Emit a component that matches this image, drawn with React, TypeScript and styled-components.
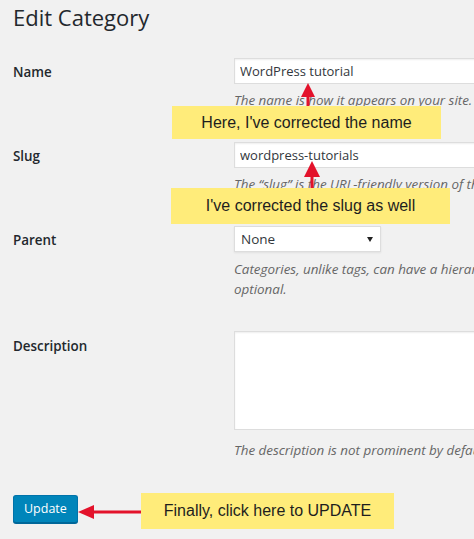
import React from "react";
import styled, { createGlobalStyle } from "styled-components";

const GlobalStyle = createGlobalStyle`
  html, body {
    margin: 0;
    padding: 0;
    background: #f1f1f1;
    overflow: hidden;
  }
  body {
    font-family: "Open Sans", "Noto Sans", sans-serif;
    color: #23282d;
  }
`;

const Page = styled.div`
  position: relative;
  width: 474px;
  height: 539px;
  overflow: hidden;
  padding-left: 13px;
  box-sizing: border-box;
`;

const Title = styled.h1`
  margin: 0;
  padding-top: 3px;
  font-size: 22px;
  font-weight: 400;
  line-height: 29px;
  color: #23282d;
`;

const Form = styled.div`
  margin-top: 10px;
  display: flex;
  flex-direction: column;
`;

const Row = styled.div`
  display: grid;
  grid-template-columns: 221px 900px;
  padding: 16px 0;
`;

const Label = styled.label<{ $shift?: number }>`
  font-size: 13.4px;
  font-weight: 600;
  line-height: 26px;
  padding-top: ${(p) => p.$shift ?? 1}px;
`;

const Field = styled.div`
  display: flex;
  flex-direction: column;
  align-items: flex-start;
`;

const TextInput = styled.input`
  box-sizing: border-box;
  width: 420px;
  height: 26px;
  margin: 0;
  padding: 0 5px;
  border: 1px solid #ddd;
  box-shadow: inset 0 1px 2px rgba(0, 0, 0, 0.07);
  background: #fff;
  font-family: inherit;
  font-size: 13px;
  color: #32373c;
  outline: none;
`;

const SelectWrap = styled.div`
  position: relative;
  width: 147px;
`;

const Select = styled.select`
  box-sizing: border-box;
  width: 147px;
  height: 26px;
  margin: 0;
  padding: 0 6px;
  border: 1px solid #ddd;
  box-shadow: 0 1px 2px rgba(0, 0, 0, 0.07);
  background: #fff;
  font-family: inherit;
  font-size: 13.5px;
  color: #32373c;
  appearance: none;
  border-radius: 0;
  outline: none;
`;

const Caret = styled.svg`
  position: absolute;
  right: 8px;
  top: 11px;
  pointer-events: none;
`;

const TextArea = styled.textarea`
  display: block;
  box-sizing: border-box;
  width: 420px;
  height: 99px;
  margin: 0;
  border: 1px solid #ddd;
  box-shadow: inset 0 1px 2px rgba(0, 0, 0, 0.07);
  background: #fff;
  resize: none;
  outline: none;
`;

const Description = styled.p<{ $gap?: number }>`
  margin: ${(p) => p.$gap ?? 6}px 0 0;
  font-size: 13.4px;
  line-height: 20px;
  font-style: italic;
  color: #666;
  white-space: nowrap;
`;

const Actions = styled.div`
  padding-top: 19px;
`;

const Button = styled.button`
  box-sizing: border-box;
  height: 28px;
  padding: 0 10px 1px;
  border: 1px solid #0073aa;
  border-bottom-color: #006799;
  border-radius: 3px;
  background: #0085ba;
  box-shadow: 0 1px 0 #006799;
  color: #fff;
  font-family: inherit;
  font-size: 12.5px;
  line-height: 26px;
  cursor: pointer;
`;

const Callout = styled.div<{ $x: number; $y: number; $w: number; $h: number }>`
  position: absolute;
  left: ${(p) => p.$x}px;
  top: ${(p) => p.$y}px;
  width: ${(p) => p.$w}px;
  height: ${(p) => p.$h}px;
  display: flex;
  align-items: center;
  justify-content: center;
  background: #ffec7a;
  font-family: "Liberation Sans", Arial, sans-serif;
  font-size: 16px;
  color: #1e1e1e;
`;

const ArrowSvg = styled.svg<{ $x: number; $y: number }>`
  position: absolute;
  left: ${(p) => p.$x}px;
  top: ${(p) => p.$y}px;
  overflow: visible;
`;

const RED = "#e3122b";

// vertical arrow pointing up: tip at (x, top), shaft runs down to bottom
const UpArrow = ({ x, top, bottom, head, half }: { x: number; top: number; bottom: number; head: number; half: number }) => (
  <ArrowSvg $x={x - half} $y={top} width={half * 2} height={bottom - top}>
    <polygon points={`${half},0 ${half * 2},${head} 0,${head}`} fill={RED} />
    <rect x={half - 1.5} y={head - 1} width={3} height={bottom - top - head + 1} fill={RED} />
  </ArrowSvg>
);

const LeftArrow = ({ y, left, right, head, half }: { y: number; left: number; right: number; head: number; half: number }) => (
  <ArrowSvg $x={left} $y={y - half} width={right - left} height={half * 2}>
    <polygon points={`0,${half} ${head},0 ${head},${half * 2}`} fill={RED} />
    <rect x={head - 1} y={half - 1.5} width={right - left - head + 1} height={3} fill={RED} />
  </ArrowSvg>
);

export default function App() {
  return (
    <Page>
      <GlobalStyle />
      <Title>Edit Category</Title>
      <Form>
        <Row>
          <Label>Name</Label>
          <Field>
            <TextInput defaultValue="WordPress tutorial" />
            <Description>The name is how it appears on your site.</Description>
          </Field>
        </Row>
        <Row>
          <Label>Slug</Label>
          <Field>
            <TextInput defaultValue="wordpress-tutorials" />
            <Description>
              The “slug” is the URL-friendly version of the name. It is usually all lowercase and contains only letters, numbers, and hyphens.
            </Description>
          </Field>
        </Row>
        <Row>
          <Label>Parent</Label>
          <Field>
            <SelectWrap>
              <Select defaultValue="none">
                <option value="none">None</option>
              </Select>
              <Caret width="6" height="5" viewBox="0 0 6 5">
                <polygon points="0,0 6,0 3,5" fill="#222" />
              </Caret>
            </SelectWrap>
            <Description $gap={7}>
              Categories, unlike tags, can have a hierarchy. You might have a Jazz category, and under that have children categories for Bebop and Big Band. Totally
              <br />
              optional.
            </Description>
          </Field>
        </Row>
        <Row>
          <Label $shift={2}>Description</Label>
          <Field>
            <TextArea />
            <Description $gap={10}>
              The description is not prominent by default; however, some themes may show it.
            </Description>
          </Field>
        </Row>
        <Actions>
          <Button>Update</Button>
        </Actions>
      </Form>

      <UpArrow x={307.5} top={83} bottom={107} head={14} half={7} />
      <Callout $x={172} $y={106} $w={269} $h={33}>
        Here, I've corrected the name
      </Callout>

      <UpArrow x={312} top={161} bottom={189} head={16} half={8} />
      <Callout $x={171} $y={188} $w={279} $h={36}>
        I've corrected the slug as well
      </Callout>

      <LeftArrow y={512} left={78} right={142} head={16} half={7} />
      <Callout $x={141} $y={493} $w={253} $h={36}>
        Finally, click here to UPDATE
      </Callout>
    </Page>
  );
}
